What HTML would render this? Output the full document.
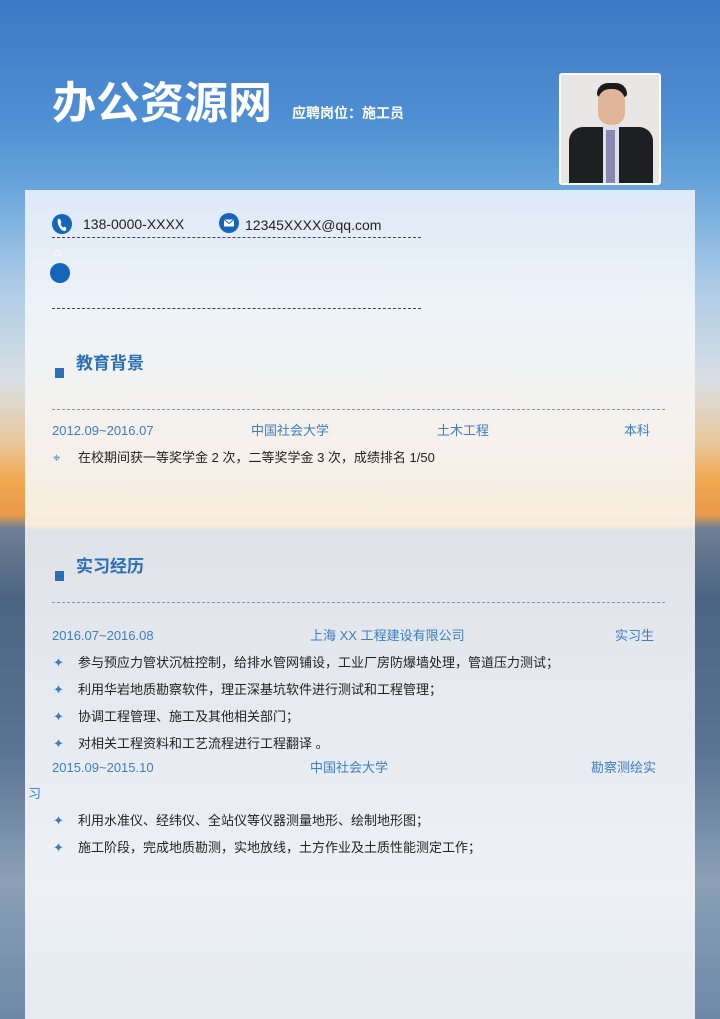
<!DOCTYPE html>
<html><head><meta charset="utf-8"><style>
*{margin:0;padding:0;box-sizing:border-box}
body{width:720px;height:1019px;position:relative;overflow:hidden;font-family:"Liberation Sans","Noto Sans CJK SC",sans-serif;
background:linear-gradient(180deg,#3d78c6 0px,#4f8fd3 120px,#6aa6dc 190px,#a9c9e6 280px,#d9dfe4 380px,#e8c9a0 440px,#f0a850 480px,#e89a48 515px,#6d7f94 528px,#4b6482 600px,#5a7392 750px,#8aa0b8 880px,#6e88a6 1019px)}
.panel{position:absolute;left:25px;top:190px;width:670px;height:829px;
background:linear-gradient(180deg,#dde9f6 0px,#eef3f8 120px,#f5f1ec 250px,#f8ecdc 335px,#f7ead9 336px,#dfe3e8 340px,#e6eaef 500px,#edf0f4 700px,#e4eaf0 829px)}
.a{position:absolute;white-space:nowrap;line-height:18px}
.t{font-size:13px;color:#222}
.b{font-size:13px;color:#3d7dc0}
.h{font-size:17px;font-weight:bold;color:#2a6fb5;line-height:22px}
.sq{position:absolute;width:9px;height:10px;background:#2a6fb5}
.dash{position:absolute;height:0;border-top:1px dashed #444}
.dashb{position:absolute;height:0;border-top:1px dashed #6d9cd0}
.bl{position:absolute;color:#3d7dc0;font-size:13px;line-height:18px}
</style></head><body>
<div class="a" style="left:52px;top:77px;font-size:44px;line-height:54px;font-weight:bold;color:#fff">办公资源网</div>
<div class="a" style="left:292px;top:104px;font-size:14px;font-weight:bold;color:#fff">应聘岗位：施工员</div>
<div class="a" style="left:559px;top:73px;width:102px;height:112px;border:2px solid #fff;border-radius:3px;background:#e9e7e6;overflow:hidden">
<div style="position:absolute;left:36px;top:8px;width:30px;height:14px;background:#1b1b1b;border-radius:14px 14px 4px 4px"></div>
<div style="position:absolute;left:37px;top:14px;width:27px;height:36px;background:#e0b59a;border-radius:12px"></div>
<div style="position:absolute;left:8px;top:52px;width:84px;height:60px;background:#1e1f22;border-radius:14px 14px 0 0"></div>
<div style="position:absolute;left:42px;top:50px;width:16px;height:60px;background:#dfe0e8"></div>
<div style="position:absolute;left:45px;top:55px;width:9px;height:55px;background:#8c86b3"></div>
</div>
<div class="panel"></div>
<svg class="a" style="left:52px;top:214px" width="20" height="20"><circle cx="10" cy="10" r="10" fill="#1565b8"/><path d="M6 5c1-1 2 0 3 2s-1 2 0 4 2 3 3 2 3 1 2 3-4 1-6-2-3-7-2-9z" fill="#fff"/></svg>
<div class="a t" style="left:83px;top:215px;font-size:14px">138-0000-XXXX</div>
<svg class="a" style="left:219px;top:213px" width="20" height="20"><circle cx="10" cy="10" r="10" fill="#1565b8"/><rect x="5" y="6.5" width="10" height="7" fill="#fff"/><path d="M5 6.5l5 4 5-4" stroke="#1565b8" fill="none"/></svg>
<div class="a t" style="left:245px;top:216px;font-size:14px">12345XXXX@qq.com</div>
<div class="dash" style="left:52px;top:237px;width:369px"></div>
<div class="a" style="left:54px;top:243px;color:#fff;font-size:12px">⌂</div>
<div class="a" style="left:50px;top:263px;width:20px;height:20px;border-radius:50%;background:#1565b8"></div>
<div class="dash" style="left:52px;top:308px;width:369px"></div>

<div class="sq" style="left:55px;top:368px"></div>
<div class="a h" style="left:76px;top:353px">教育背景</div>
<div class="dashb" style="left:52px;top:409px;width:613px"></div>
<div class="a b" style="left:52px;top:422px">2012.09~2016.07</div>
<div class="a b" style="left:251px;top:422px">中国社会大学</div>
<div class="a b" style="left:437px;top:422px">土木工程</div>
<div class="a b" style="left:624px;top:422px">本科</div>
<div class="bl" style="left:53px;top:449px">⌖</div>
<div class="a t" style="left:78px;top:449px">在校期间获一等奖学金 2 次，二等奖学金 3 次，成绩排名 1/50</div>

<div class="sq" style="left:55px;top:571px"></div>
<div class="a h" style="left:76px;top:556px">实习经历</div>
<div class="dashb" style="left:52px;top:602px;width:613px"></div>
<div class="a b" style="left:52px;top:627px">2016.07~2016.08</div>
<div class="a b" style="left:310px;top:627px">上海 XX 工程建设有限公司</div>
<div class="a b" style="left:615px;top:627px">实习生</div>
<div class="bl" style="left:53px;top:654px">✦</div><div class="a t" style="left:78px;top:654px">参与预应力管状沉桩控制，给排水管网铺设，工业厂房防爆墙处理，管道压力测试；</div>
<div class="bl" style="left:53px;top:681px">✦</div><div class="a t" style="left:78px;top:681px">利用华岩地质勘察软件，理正深基坑软件进行测试和工程管理；</div>
<div class="bl" style="left:53px;top:708px">✦</div><div class="a t" style="left:78px;top:708px">协调工程管理、施工及其他相关部门；</div>
<div class="bl" style="left:53px;top:735px">✦</div><div class="a t" style="left:78px;top:735px">对相关工程资料和工艺流程进行工程翻译 。</div>
<div class="a b" style="left:52px;top:759px">2015.09~2015.10</div>
<div class="a b" style="left:310px;top:759px">中国社会大学</div>
<div class="a b" style="left:591px;top:759px">勘察测绘实</div>
<div class="a b" style="left:28px;top:785px">习</div>
<div class="bl" style="left:53px;top:812px">✦</div><div class="a t" style="left:78px;top:812px">利用水准仪、经纬仪、全站仪等仪器测量地形、绘制地形图；</div>
<div class="bl" style="left:53px;top:839px">✦</div><div class="a t" style="left:78px;top:839px">施工阶段，完成地质勘测，实地放线，土方作业及土质性能测定工作；</div>
</body></html>
